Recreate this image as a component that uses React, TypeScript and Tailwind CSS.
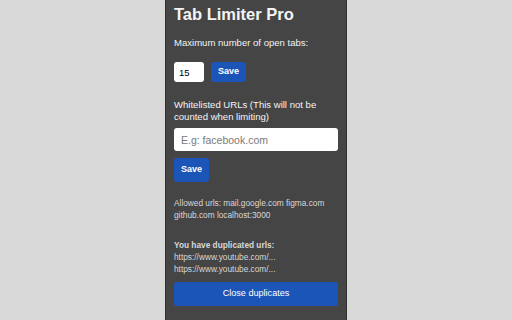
export default function App() {
  return (
    <div className="flex min-h-[320px] w-full justify-center bg-[#d9d9d9] font-['Liberation_Sans',Arial,sans-serif]">
      <div className="w-[182px] border-x border-[#303030] bg-[#454545] px-[8px] pt-[4px] text-[#f4f4f4]">
        <h1 className="text-[16.5px] font-bold leading-[20px]">Tab Limiter Pro</h1>

        <p className="mt-[13px] text-[9.55px] leading-[12px]">Maximum number of open tabs:</p>

        <div className="mt-[13px] flex items-center">
          <input
            defaultValue="15"
            className="h-[20px] w-[30px] rounded-[3px] bg-white pl-[5px] text-[9.5px] text-black outline-none"
          />
          <button className="ml-[7px] h-[20px] rounded-[3px] bg-[#1b55b8] px-[7px] text-[9px] font-bold text-white">
            Save
          </button>
        </div>

        <p className="mt-[17px] text-[9.55px] leading-[12px]">
          Whitelisted URLs (This will not be counted when limiting)
        </p>

        <input
          placeholder="E.g: facebook.com"
          className="mt-[5px] block h-[23px] w-full rounded-[3px] bg-white px-[7px] text-[10.5px] text-black outline-none placeholder:text-[#7a7a7a]"
        />

        <button className="mt-[7px] block h-[24px] rounded-[3px] bg-[#1b55b8] px-[7px] text-[9px] font-bold text-white">
          Save
        </button>

        <p className="mt-[15px] text-[8.3px] leading-[12px] text-[#d8d8d8]">
          Allowed urls: mail.google.com figma.com github.com localhost:3000
        </p>

        <div className="mt-[18px] text-[8.3px] leading-[12px] text-[#d8d8d8]">
          <p className="font-bold">You have duplicated urls:</p>
          <p>https://www.youtube.com/...</p>
          <p>https://www.youtube.com/...</p>
        </div>

        <button className="mt-[7px] block h-[24px] w-full rounded-[3px] bg-[#1b55b8] text-[9.1px] text-white">
          Close duplicates
        </button>
      </div>
    </div>
  );
}
